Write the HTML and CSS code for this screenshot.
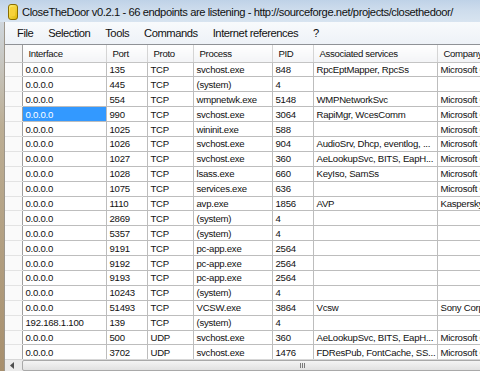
FILE: index.html
```html
<!DOCTYPE html>
<html>
<head>
<meta charset="utf-8">
<link rel="stylesheet" href="styles.css">
</head>
<body>
<div class="window">
  <div class="titlebar">
    <svg class="appicon" width="10" height="16" viewBox="0 0 10 16">
      <defs>
        <linearGradient id="g" x1="0" y1="0" x2="1" y2="1">
          <stop offset="0" stop-color="#fff27a"/>
          <stop offset="1" stop-color="#e0b400"/>
        </linearGradient>
      </defs>
      <rect x="0.5" y="0.5" width="9" height="15" rx="2.5" fill="url(#g)" stroke="#8a6d00"/>
      <rect x="2" y="3" width="5" height="9" rx="1" fill="#f7d23a"/>
    </svg>
    <span class="title">CloseTheDoor v0.2.1 - 66 endpoints are listening - http://sourceforge.net/projects/closethedoor/</span>
  </div>
  <div class="main">
    <div class="frame"></div>
    <div class="client">
      <div class="menubar">
        <span>File</span><span>Selection</span><span>Tools</span><span>Commands</span><span>Internet references</span><span>?</span>
      </div>
      <div class="grid">
        <table>
          <colgroup>
            <col class="c0"><col class="c1"><col class="c2"><col class="c3"><col class="c4"><col class="c5"><col class="c6"><col class="c7">
          </colgroup>
          <thead>
            <tr><th class="gut"></th><th>Interface</th><th>Port</th><th>Proto</th><th>Process</th><th>PID</th><th>Associated services</th><th>Company</th></tr>
          </thead>
          <tbody>
            <tr><td class="gut"></td><td>0.0.0.0</td><td>135</td><td>TCP</td><td>svchost.exe</td><td>848</td><td>RpcEptMapper, RpcSs</td><td>Microsoft Corporation</td></tr>
            <tr><td class="gut"></td><td>0.0.0.0</td><td>445</td><td>TCP</td><td>(system)</td><td>4</td><td></td><td></td></tr>
            <tr><td class="gut"></td><td>0.0.0.0</td><td>554</td><td>TCP</td><td>wmpnetwk.exe</td><td>5148</td><td>WMPNetworkSvc</td><td>Microsoft Corporation</td></tr>
            <tr><td class="gut"></td><td class="sel">0.0.0.0</td><td>990</td><td>TCP</td><td>svchost.exe</td><td>3064</td><td>RapiMgr, WcesComm</td><td>Microsoft Corporation</td></tr>
            <tr><td class="gut"></td><td>0.0.0.0</td><td>1025</td><td>TCP</td><td>wininit.exe</td><td>588</td><td></td><td>Microsoft Corporation</td></tr>
            <tr><td class="gut"></td><td>0.0.0.0</td><td>1026</td><td>TCP</td><td>svchost.exe</td><td>904</td><td>AudioSrv, Dhcp, eventlog, ...</td><td>Microsoft Corporation</td></tr>
            <tr><td class="gut"></td><td>0.0.0.0</td><td>1027</td><td>TCP</td><td>svchost.exe</td><td>360</td><td>AeLookupSvc, BITS, EapH...</td><td>Microsoft Corporation</td></tr>
            <tr><td class="gut"></td><td>0.0.0.0</td><td>1028</td><td>TCP</td><td>lsass.exe</td><td>660</td><td>KeyIso, SamSs</td><td>Microsoft Corporation</td></tr>
            <tr><td class="gut"></td><td>0.0.0.0</td><td>1075</td><td>TCP</td><td>services.exe</td><td>636</td><td></td><td>Microsoft Corporation</td></tr>
            <tr><td class="gut"></td><td>0.0.0.0</td><td>1110</td><td>TCP</td><td>avp.exe</td><td>1856</td><td>AVP</td><td>Kaspersky Lab</td></tr>
            <tr><td class="gut"></td><td>0.0.0.0</td><td>2869</td><td>TCP</td><td>(system)</td><td>4</td><td></td><td></td></tr>
            <tr><td class="gut"></td><td>0.0.0.0</td><td>5357</td><td>TCP</td><td>(system)</td><td>4</td><td></td><td></td></tr>
            <tr><td class="gut"></td><td>0.0.0.0</td><td>9191</td><td>TCP</td><td>pc-app.exe</td><td>2564</td><td></td><td></td></tr>
            <tr><td class="gut"></td><td>0.0.0.0</td><td>9192</td><td>TCP</td><td>pc-app.exe</td><td>2564</td><td></td><td></td></tr>
            <tr><td class="gut"></td><td>0.0.0.0</td><td>9193</td><td>TCP</td><td>pc-app.exe</td><td>2564</td><td></td><td></td></tr>
            <tr><td class="gut"></td><td>0.0.0.0</td><td>10243</td><td>TCP</td><td>(system)</td><td>4</td><td></td><td></td></tr>
            <tr><td class="gut"></td><td>0.0.0.0</td><td>51493</td><td>TCP</td><td>VCSW.exe</td><td>3864</td><td>Vcsw</td><td>Sony Corporation</td></tr>
            <tr><td class="gut"></td><td>192.168.1.100</td><td>139</td><td>TCP</td><td>(system)</td><td>4</td><td></td><td></td></tr>
            <tr><td class="gut"></td><td>0.0.0.0</td><td>500</td><td>UDP</td><td>svchost.exe</td><td>360</td><td>AeLookupSvc, BITS, EapH...</td><td>Microsoft Corporation</td></tr>
            <tr><td class="gut"></td><td>0.0.0.0</td><td>3702</td><td>UDP</td><td>svchost.exe</td><td>1476</td><td>FDResPub, FontCache, SS...</td><td>Microsoft Corporation</td></tr>
          </tbody>
        </table>
      </div>
      <div class="hscroll">
        <div class="arrow"><svg width="4" height="7" viewBox="0 0 4 7"><path d="M4 0 L0 3.5 L4 7 Z" fill="#4d4d4d"/></svg></div>
        <div class="thumb"><span class="grip"></span></div>
      </div>
    </div>
  </div>
</div>
</body>
</html>
```

FILE: styles.css
```css
* { box-sizing: border-box; }
html, body { margin: 0; padding: 0; }
body { width: 480px; height: 371px; overflow: hidden; background: #fff; }

.window {
  width: 480px;
  height: 371px;
  display: flex;
  flex-direction: column;
  overflow: hidden;
  font-family: "Liberation Sans", Arial, sans-serif;
  color: #111;
}

.titlebar {
  height: 22px;
  flex: none;
  display: flex;
  align-items: center;
  background: linear-gradient(180deg, #bfd2e7 0%, #cddcec 45%, #d8e4f0 100%);
  padding-left: 8px;
}
.appicon { flex: none; margin-top: 1px; }
.title {
  margin-left: 4px;
  font-size: 11.2px;
  letter-spacing: -0.42px;
  white-space: nowrap;
  margin-top: 1px;
}

.main { flex: 1; display: flex; min-height: 0; }
.frame {
  width: 5px;
  flex: none;
  background: linear-gradient(180deg, #cfd6dc 0%, #bcae94 30%, #a78f6d 100%);
  border-right: 1px solid #9c958a;
}
.client {
  flex: 1;
  display: flex;
  flex-direction: column;
  min-width: 0;
  background: #fff;
}

.menubar {
  height: 23px;
  flex: none;
  display: flex;
  align-items: center;
  background: linear-gradient(180deg, #f8fafc 0%, #eef2f7 100%);
  border-bottom: 1px solid #8f9296;
  padding-left: 12px;
  font-size: 11.2px;
  letter-spacing: -0.45px;
}
.menubar span { margin-right: 15px; white-space: nowrap; }

.grid { flex: 1; overflow: hidden; min-height: 0; }
table {
  border-collapse: collapse;
  table-layout: fixed;
  width: 600px;
  font-size: 9.6px;
  letter-spacing: -0.25px;
}
.c0 { width: 17px; }
.c1 { width: 84px; }
.c2 { width: 41px; }
.c3 { width: 46px; }
.c4 { width: 79px; }
.c5 { width: 41px; }
.c6 { width: 124px; }
.c7 { width: 168px; }

th {
  height: 17px;
  font-weight: normal;
  text-align: left;
  padding: 0 0 0 6px;
  background: linear-gradient(180deg, #ffffff 0%, #f3f4f6 100%);
  border-right: 1px solid #d5d5d5;
  border-bottom: 1px solid #c4c4c4;
  white-space: nowrap;
  overflow: hidden;
  font-size: 9.6px;
  letter-spacing: -0.35px;
}
td {
  height: 14.9px;
  padding: 0 0 0 3px;
  border-right: 1px solid #bdbdbd;
  border-bottom: 1px solid #bdbdbd;
  white-space: nowrap;
  overflow: hidden;
  line-height: 13px;
}
th.gut, td.gut {
  padding: 0;
  background: #fafafa;
  border-right: 1px solid #9f9f9f;
  border-bottom: 1px solid #e3e3e3;
}
th.gut { background: #f4f4f4; border-bottom: 1px solid #c4c4c4; }
td.sel { background: #3399ff; color: #fff; }

.hscroll {
  height: 12px;
  flex: none;
  display: flex;
  background: #eaeaea;
  border-top: 1px solid #d7d7d7;
}
.arrow {
  width: 17px;
  flex: none;
  display: flex;
  align-items: center;
  justify-content: center;
  padding-right: 4px;
}
.thumb {
  flex: 1;
  margin-right: -80px;
  background: linear-gradient(180deg, #f4f4f4 0%, #e1e1e1 100%);
  border: 1px solid #a9a9a9;
  border-radius: 2px;
  display: flex;
  justify-content: center;
  align-items: center;
}
.grip {
  width: 6px;
  height: 5px;
  background: repeating-linear-gradient(90deg, #7a7a7a 0 1px, transparent 1px 2px);
  margin-left: 24px;
}
```
